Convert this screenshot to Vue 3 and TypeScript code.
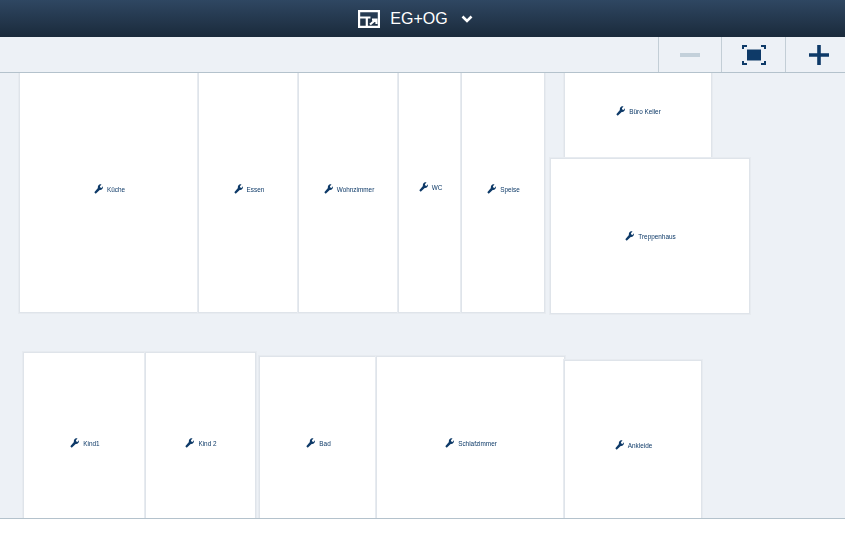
<script setup lang="ts">
interface Room {
  name: string;
  x: number;
  y: number;
  w: number;
  h: number;
}

// coordinates on the plan canvas, some rooms run past its clipped edges
const rooms: Room[] = [
  { name: "Küche", x: 19, y: -8, w: 180, h: 248 },
  { name: "Essen", x: 198, y: -8, w: 101, h: 248 },
  { name: "Wohnzimmer", x: 298, y: -8, w: 101, h: 248 },
  { name: "WC", x: 398, y: -12, w: 64, h: 252 },
  { name: "Speise", x: 461, y: -8, w: 84, h: 248 },
  { name: "Büro Keller", x: 564, y: -9, w: 148, h: 94 },
  { name: "Treppenhaus", x: 550, y: 85, w: 200, h: 156 },
  { name: "Kind1", x: 23, y: 279, w: 123, h: 182 },
  { name: "Kind 2", x: 145, y: 279, w: 111, h: 182 },
  { name: "Bad", x: 259, y: 283, w: 118, h: 174 },
  { name: "Schlafzimmer", x: 376, y: 283, w: 189, h: 174 },
  { name: "Ankleide", x: 564, y: 287, w: 138, h: 170 },
];

function roomStyle(r: Room) {
  return { left: r.x + "px", top: r.y + "px", width: r.w + "px", height: r.h + "px" };
}
</script>

<template>
  <div class="page">
    <header class="topbar">
      <svg class="logo" width="22" height="18" viewBox="0 0 22 18" fill="none" stroke="#fff" stroke-width="2.200">
        <path d="M1.100 1.100h19.800v15.800H1.100z" />
        <path d="M2 7.500h10.500M8.800 7.500V17M12 14.500l6-5M14 9.700h4.500V14" />
      </svg>
      <span class="title">EG+OG</span>
      <svg class="chev" width="12" height="8" viewBox="0 0 12 8" fill="none" stroke="#fff" stroke-width="2.600">
        <path d="M1.500 1.500 6 6l4.500-4.500" />
      </svg>
    </header>

    <div class="toolbar">
      <button class="tool" type="button">
        <svg width="20" height="4" viewBox="0 0 20 4"><path d="M0 0h20v4H0z" fill="#c3d0da" /></svg>
      </button>
      <button class="tool fit" type="button">
        <svg width="24" height="20" viewBox="0 0 24 20" fill="none">
          <path d="M1 4V1h4M19 1h4v3M1 16v3h4M19 19h4v-3" stroke="#0e3a68" stroke-width="2" />
          <path d="M5 4.500h14v11H5z" fill="#0e3a68" />
        </svg>
      </button>
      <button class="tool plus" type="button">
        <svg width="20" height="20" viewBox="0 0 20 20"><path d="M8.200 0h3.600v8.200H20v3.600h-8.200V20H8.200v-8.200H0V8.200h8.200z" fill="#0e3a68" /></svg>
      </button>
    </div>

    <main class="plan">
      <div v-for="r in rooms" :key="r.name" class="room" :style="roomStyle(r)">
        <svg class="wrench" width="9" height="10" viewBox="0 0 9 9" preserveAspectRatio="none">
          <path d="M0.300 7.500 3.900 3.700C3.500 2.300 4.500 0.400 6.400 0.300c.4 0 .8 0 1.100.2L5.900 2 6.300 3.200 7.500 3.600 8.900 2.100c.3 1.800-1 3.500-3.200 3.200L1.700 8.800z" fill="#0e3a68" />
        </svg>
        <span class="label">{{ r.name }}</span>
      </div>
    </main>

    <footer class="bottom"></footer>
  </div>
</template>

<style scoped>
.page {
  width: 845px;
  height: 533px;
  display: flex;
  flex-direction: column;
  background: #fff;
  overflow: hidden;
  font-family: "Liberation Sans", Arial, sans-serif;
}
.topbar {
  height: 37px;
  flex: none;
  display: flex;
  align-items: center;
  justify-content: center;
  gap: 10px;
  padding-right: 14px;
  box-sizing: border-box;
  background: linear-gradient(#2f4762, #1a2a3b);
  color: #fff;
}
.title {
  font-size: 16px;
  margin-right: 3px;
}
.toolbar {
  height: 36px;
  flex: none;
  display: flex;
  justify-content: flex-end;
  box-sizing: border-box;
  background: #edf1f6;
  border-bottom: 1px solid #b4c2cc;
}
.tool {
  width: 64px;
  height: 35px;
  padding: 0;
  display: flex;
  align-items: center;
  justify-content: center;
  background: none;
  border: 0;
  border-left: 1px solid #c3ced6;
}
.tool:first-child {
  width: 63px;
}
.plus {
  width: 60px;
  padding-left: 7px;
}
.plan {
  position: relative;
  height: 445px;
  flex: none;
  background: #edf1f6;
  overflow: hidden;
}
.room {
  position: absolute;
  box-sizing: border-box;
  display: flex;
  align-items: center;
  justify-content: center;
  gap: 4px;
  padding-left: 1px;
  background: #fff;
  border: 1px solid #dfe4ea;
  box-shadow: 0 0 0 1px #e7ebf0;
}
.label {
  font-size: 6.400px;
  color: #0e3a68;
  filter: blur(0.3px);
}
.bottom {
  flex: 1;
  background: #fff;
  border-top: 1px solid #b4c2cc;
}
</style>
